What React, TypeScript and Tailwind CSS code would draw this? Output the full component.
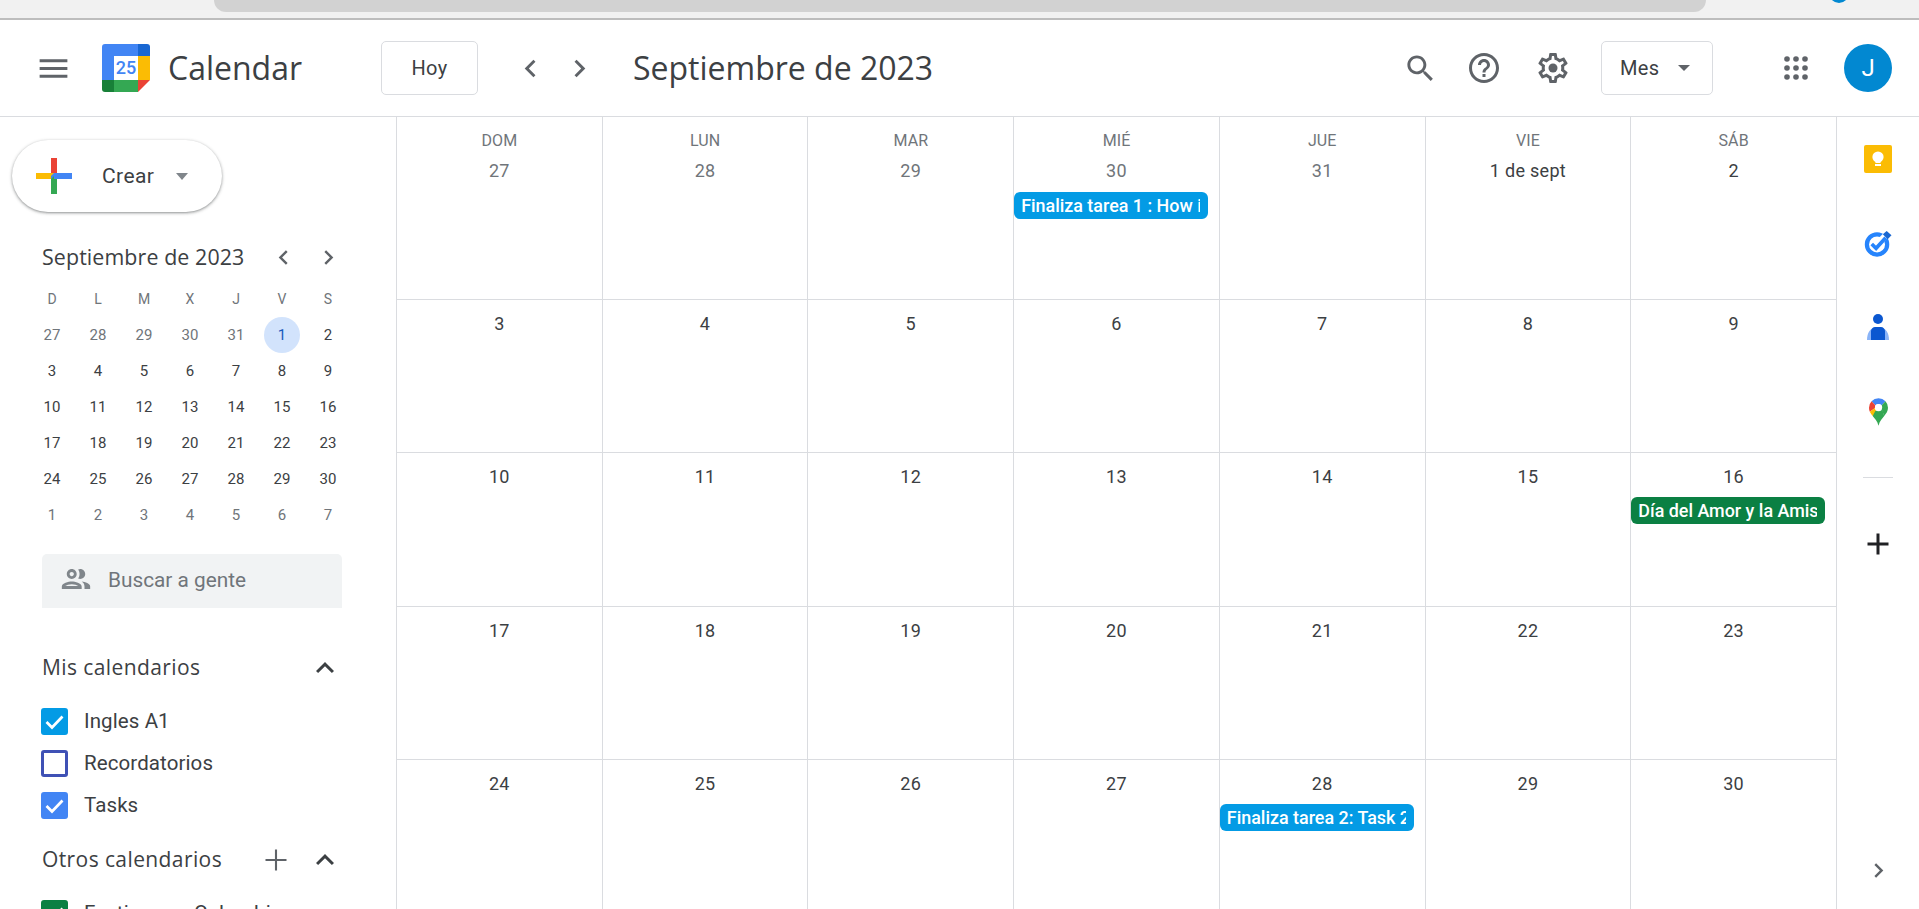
const ICONS = {
  menu: 'M3 18h18v-2H3v2zm0-5h18v-2H3v2zm0-7v2h18V6H3z',
  left: 'M15.41 7.41L14 6l-6 6 6 6 1.41-1.41L10.83 12z',
  right: 'M10 6L8.59 7.41 13.17 12l-4.58 4.59L10 18l6-6z',
  up: 'M12 8l-6 6 1.41 1.41L12 10.83l4.59 4.58L18 14z',
  search:
    'M15.5 14h-.79l-.28-.27C15.41 12.59 16 11.11 16 9.5 16 5.91 13.09 3 9.5 3S3 5.91 3 9.5 5.91 16 9.5 16c1.61 0 3.09-.59 4.23-1.57l.27.28v.79l5 4.99L20.49 19l-4.99-5zm-6 0C7.01 14 5 11.99 5 9.5S7.01 5 9.5 5 14 7.01 14 9.5 11.99 14 9.5 14z',
  help:
    'M11 18h2v-2h-2v2zm1-16C6.48 2 2 6.48 2 12s4.48 10 10 10 10-4.48 10-10S17.52 2 12 2zm0 18c-4.41 0-8-3.59-8-8s3.59-8 8-8 8 3.59 8 8-3.59 8-8 8zm0-14c-2.21 0-4 1.79-4 4h2c0-1.1.9-2 2-2s2 .9 2 2c0 2-3 1.75-3 5h2c0-2.25 3-2.5 3-5 0-2.21-1.79-4-4-4z',
  settings:
    'M19.43 12.98c.04-.32.07-.64.07-.98 0-.34-.03-.66-.07-.98l2.11-1.65c.19-.15.24-.42.12-.64l-2-3.46c-.09-.16-.26-.25-.44-.25-.06 0-.12.01-.17.03l-2.49 1c-.52-.4-1.08-.73-1.69-.98l-.38-2.65C14.46 2.18 14.25 2 14 2h-4c-.25 0-.46.18-.49.42l-.38 2.65c-.61.25-1.17.59-1.69.98l-2.49-1c-.06-.02-.12-.03-.18-.03-.17 0-.34.09-.43.25l-2 3.46c-.13.22-.07.49.12.64l2.11 1.65c-.04.32-.07.65-.07.98 0 .33.03.66.07.98l-2.11 1.65c-.19.15-.24.42-.12.64l2 3.46c.09.16.26.25.44.25.06 0 .12-.01.17-.03l2.49-1c.52.4 1.08.73 1.69.98l.38 2.65c.03.24.24.42.49.42h4c.25 0 .46-.18.49-.42l.38-2.65c.61-.25 1.17-.59 1.69-.98l2.49 1c.06.02.12.03.18.03.17 0 .34-.09.43-.25l2-3.46c.12-.22.07-.49-.12-.64l-2.11-1.65zm-1.98-1.71c.04.31.05.52.05.73 0 .21-.02.43-.05.73l-.14 1.13.89.7 1.08.84-.7 1.21-1.27-.51-1.04-.42-.9.68c-.43.32-.84.56-1.25.73l-1.06.43-.16 1.13-.2 1.35h-1.4l-.19-1.35-.16-1.13-1.06-.43c-.43-.18-.83-.41-1.23-.71l-.91-.7-1.06.43-1.27.51-.7-1.21 1.08-.84.89-.7-.14-1.13c-.03-.31-.05-.54-.05-.74s.02-.43.05-.73l.14-1.13-.89-.7-1.08-.84.7-1.21 1.27.51 1.04.42.9-.68c.43-.32.84-.56 1.25-.73l1.06-.43.16-1.13.2-1.35h1.39l.19 1.35.16 1.13 1.06.43c.43.18.83.41 1.23.71l.91.7 1.06-.43 1.27-.51.7 1.21-1.07.85-.89.7.14 1.13z',
  people:
    'M9 13.75c-2.34 0-7 1.17-7 3.5V19h14v-1.75c0-2.33-4.66-3.5-7-3.5zM4.34 17c.84-.58 2.87-1.25 4.66-1.25s3.82.67 4.66 1.25H4.34zM9 12c1.93 0 3.5-1.57 3.5-3.5S10.93 5 9 5 5.5 6.57 5.5 8.5 7.07 12 9 12zm0-5c.83 0 1.5.67 1.5 1.5S9.83 10 9 10s-1.5-.67-1.5-1.5S8.17 7 9 7zm7.04 6.81c1.16.84 1.96 1.96 1.96 3.44V19h4v-1.75c0-2.02-3.5-3.17-5.96-3.44zM15 12c1.93 0 3.5-1.57 3.5-3.5S16.93 5 15 5c-.54 0-1.04.13-1.5.35.63.89 1 1.98 1 3.15s-.37 2.26-1 3.15c.46.22.96.35 1.5.35z',
  plus: 'M19 13h-6v6h-2v-6H5v-2h6V5h2v6h6v2z',
  thinPlus: 'M19 12.7h-6.3V19h-1.4v-6.3H5v-1.4h6.3V5h1.4v6.3H19z',
};

function Icon({ d, className }: { d: string; className: string }) {
  return (
    <svg viewBox="0 0 24 24" fill="currentColor" className={className}>
      <path d={d} />
    </svg>
  );
}

function CalendarLogo() {
  return (
    <svg viewBox="0 0 48 48" className="w-[48px] h-[48px] shrink-0">
      <path d="M36 0H3a3 3 0 0 0-3 3v33h12V12h24z" fill="#4285f4" />
      <path d="M36 0v12h12V3a3 3 0 0 0-3-3z" fill="#1967d2" />
      <rect x="36" y="12" width="12" height="24" fill="#fbbc04" />
      <rect x="12" y="36" width="24" height="12" fill="#34a853" />
      <path d="M0 36v9a3 3 0 0 0 3 3h9V36z" fill="#188038" />
      <path d="M36 36h12L36 48z" fill="#ea4335" />
      <rect x="12" y="12" width="24" height="24" fill="#fff" />
      <text x="24" y="30" textAnchor="middle" fontSize="18" fontWeight="500" fill="#4285f4" fontFamily="Roboto, sans-serif">
        25
      </text>
    </svg>
  );
}

function GooglePlus() {
  return (
    <svg viewBox="0 0 36 36" className="w-[36px] h-[36px] shrink-0">
      <rect x="15" y="0" width="6" height="18" fill="#ea4335" />
      <rect x="0" y="15" width="18" height="6" fill="#fbbc04" />
      <rect x="15" y="18" width="6" height="18" fill="#34a853" />
      <rect x="18" y="15" width="18" height="6" fill="#4285f4" />
      <path d="M15 21l6-6h-3l-3 3z" fill="#4285f4" />
    </svg>
  );
}

function KeepIcon() {
  return (
    <svg viewBox="0 0 28 28" className="w-[28px] h-[28px]">
      <rect width="28" height="28" rx="2" fill="#fbbc04" />
      <circle cx="14" cy="12" r="5.6" fill="#fff" />
      <rect x="11.5" y="15" width="5" height="3" fill="#fff" />
      <rect x="11" y="19" width="6" height="2" fill="#fff" />
    </svg>
  );
}

function TasksIcon() {
  return (
    <svg viewBox="0 0 28 28" className="w-[28px] h-[27px]">
      <circle cx="13" cy="15" r="10.5" fill="none" stroke="#2684fc" strokeWidth="4.4" />
      <path d="M21 2l6 2-8 10-5-5z" fill="#fff" />
      <path d="M23 1l5 4.500-4 4-5-5z" fill="#1967d2" />
      <path d="M7.500 14.500l4.500 4.500 10-11" fill="none" stroke="#2684fc" strokeWidth="3.800" />
    </svg>
  );
}

function ContactsIcon() {
  return (
    <svg viewBox="0 0 22 26" className="w-[22px] h-[26px]">
      <circle cx="11" cy="5" r="5" fill="#0b57d0" />
      <path d="M0 26c0-7 3-12 8-12h6c5 0 8 5 8 12z" fill="#8ab4f8" />
      <path d="M4 26V17c0-2 2-4 4-4h6c2 0 4 2 4 4v9z" fill="#0b57d0" />
    </svg>
  );
}

function MapsIcon() {
  return (
    <svg viewBox="0 0 18 26" className="w-[19px] h-[28px]">
      <path d="M9 0a9 9 0 0 0-6.600 2.900L6 6.600A3.600 3.600 0 0 1 9 5.400a3.600 3.600 0 0 1 3 1.200l3.600-3.700A9 9 0 0 0 9 0z" fill="#4285f4" />
      <path d="M2.400 2.900A9 9 0 0 0 0 9c0 1.500.3 2.700.8 3.800L6 9a3.600 3.600 0 0 1 0-2.400z" fill="#ea4335" />
      <path d="M.8 12.800C1.500 14.300 2.400 15.500 3.500 16.800L12.300 10.500 9 12.600A3.600 3.600 0 0 1 6 9z" fill="#fbbc04" />
      <path d="M3.500 16.800C5.300 19.200 8 21.500 9 26c1-4.500 3.600-6.800 5.400-9.200L12 8.600 6 12z" fill="#34a853" />
      <path d="M12 6.600L15.600 2.900A9 9 0 0 1 18 9c0 3-1.600 5.500-3.600 7.800L12 10.500A3.600 3.600 0 0 0 12 6.600z" fill="#34a853" />
      <circle cx="9" cy="9" r="3.400" fill="#fff" />
    </svg>
  );
}

const MINI_HEADS = ['D', 'L', 'M', 'X', 'J', 'V', 'S'];
const MINI_DAYS = [
  27, 28, 29, 30, 31, 1, 2, 3, 4, 5, 6, 7, 8, 9, 10, 11, 12, 13, 14, 15, 16, 17, 18, 19, 20, 21, 22, 23, 24, 25, 26, 27,
  28, 29, 30, 1, 2, 3, 4, 5, 6, 7,
];

function MiniCalendar() {
  return (
    <div className="ml-[29px] mt-[6px] grid grid-cols-[repeat(7,46px)] auto-rows-[36px] text-[15px] text-center">
      {MINI_HEADS.map((h) => (
        <div key={h} className="flex items-center justify-center text-[14px] text-[#70757a]">
          {h}
        </div>
      ))}
      {MINI_DAYS.map((day, i) => {
        const outside = i < 5 || i >= 35;
        return (
          <div key={i} className="flex items-center justify-center pt-px">
            {i === 5 ? (
              <span className="w-[36px] h-[36px] -mt-px rounded-full bg-[#d2e3fc] text-[#185abc] flex items-center justify-center">
                {day}
              </span>
            ) : (
              <span className={outside ? 'text-[#70757a]' : 'text-[#3c4043]'}>{day}</span>
            )}
          </div>
        );
      })}
    </div>
  );
}

function CheckRow({ label, color, checked }: { label: string; color: string; checked: boolean }) {
  return (
    <div className="h-[42px] flex items-center pl-[41px] text-[20.500px] tracking-[0.1px] text-[#3c4043] shrink-0">
      <span
        className={`w-[27px] h-[27px] rounded-[3px] flex items-center justify-center shrink-0 border-[3px] ${color} ${
          checked ? '' : 'bg-white'
        }`}
      >
        {checked && (
          <svg viewBox="0 0 21 21" className="w-[21px] h-[21px]">
            <path d="M2.500 11l5.500 5.500L18.500 5.500" fill="none" stroke="#fff" strokeWidth="2.700" />
          </svg>
        )}
      </span>
      <span className="ml-[16px] whitespace-nowrap">{label}</span>
    </div>
  );
}

function Sidebar() {
  return (
    <aside className="w-[396px] shrink-0 overflow-hidden flex flex-col">
      <button className="mt-[23px] ml-[12px] w-[210px] h-[72px] shrink-0 rounded-full bg-white shadow-[0_1px_3px_1px_rgba(60,64,67,0.2),0_1px_2px_0_rgba(60,64,67,0.35)] flex items-center pl-[24px]">
        <GooglePlus />
        <span className="ml-[30px] text-[21px] tracking-[0.4px] text-[#3c4043] pt-px">Crear</span>
        <span className="ml-[22px] w-0 h-0 border-x-[6.500px] border-x-transparent border-t-[7px] border-t-[#80868b]" />
      </button>

      <div className="mt-[27px] h-[36px] shrink-0 flex items-center text-[#3c4043]">
        <span className="ml-[42px] w-[218px] font-['Open_Sans',sans-serif] text-[21.400px] tracking-[0.1px] whitespace-nowrap">
          Septiembre de 2023
        </span>
        <Icon d={ICONS.left} className="w-[29px] h-[29px] ml-[9px] text-[#5f6368]" />
        <Icon d={ICONS.right} className="w-[29px] h-[29px] ml-[16px] text-[#5f6368]" />
      </div>

      <MiniCalendar />

      <div className="mt-[21px] ml-[42px] w-[300px] h-[54px] shrink-0 bg-[#f1f3f4] rounded-t-[5px] flex items-center pl-[17px]">
        <Icon d={ICONS.people} className="w-[34px] h-[34px] text-[#80868b] -translate-y-[2px]" />
        <span className="ml-[15px] text-[20.800px] text-[#70757a]">Buscar a gente</span>
      </div>

      <div className="mt-[42px] h-[36px] shrink-0 flex items-center text-[#3c4043]">
        <span className="ml-[42px] w-[265px] font-['Open_Sans',sans-serif] font-medium text-[21px] tracking-[0.4px] whitespace-nowrap">
          Mis calendarios
        </span>
        <Icon d={ICONS.up} className="w-[36px] h-[36px]" />
      </div>

      <div className="mt-[14px] flex flex-col shrink-0">
        <CheckRow label="Ingles A1" color="bg-[#039be5] border-[#039be5]" checked />
        <CheckRow label="Recordatorios" color="border-[#3f51b5]" checked={false} />
        <CheckRow label="Tasks" color="bg-[#4285f4] border-[#4285f4]" checked />
      </div>

      <div className="mt-[16px] h-[36px] shrink-0 flex items-center text-[#3c4043]">
        <span className="ml-[42px] w-[216px] font-['Open_Sans',sans-serif] font-medium text-[21px] tracking-[0.4px] whitespace-nowrap">
          Otros calendarios
        </span>
        <Icon d={ICONS.thinPlus} className="w-[36px] h-[36px] text-[#5f6368]" />
        <Icon d={ICONS.up} className="w-[36px] h-[36px] ml-[13px]" />
      </div>

      <div className="mt-[14px] shrink-0">
        <CheckRow label="Festivos en Colombia" color="bg-[#0b8043] border-[#0b8043]" checked />
      </div>
    </aside>
  );
}

type Cell = { date: string; label?: string; muted?: boolean; event?: string; eventColor?: string };

const WEEK_LABELS = ['DOM', 'LUN', 'MAR', 'MIÉ', 'JUE', 'VIE', 'SÁB'];
const CELLS: Cell[] = [
  { date: '27', muted: true },
  { date: '28', muted: true },
  { date: '29', muted: true },
  { date: '30', muted: true, event: 'Finaliza tarea 1 : How i', eventColor: 'bg-[#039be5]' },
  { date: '31', muted: true },
  { date: '1 de sept' },
  { date: '2' },
  ...['3', '4', '5', '6', '7', '8', '9', '10', '11', '12', '13', '14', '15'].map((date) => ({ date })),
  { date: '16', event: 'Día del Amor y la Amis', eventColor: 'bg-[#0b8043]' },
  ...['17', '18', '19', '20', '21', '22', '23', '24', '25', '26', '27'].map((date) => ({ date })),
  { date: '28', event: 'Finaliza tarea 2: Task 2', eventColor: 'bg-[#039be5]' },
  { date: '29' },
  { date: '30' },
];

function MonthGrid() {
  return (
    <main className="w-[1441px] shrink-0 border-l border-[#dadce0] overflow-hidden">
      <div className="grid grid-cols-7 grid-rows-[183px_153px_154px_153px_153px] w-[1440px]">
        {CELLS.map((cell, i) => (
          <div
            key={i}
            className={`border-r border-b border-[#dadce0] flex flex-col items-center min-w-0 overflow-hidden ${
              i < 7 ? 'pt-[14px]' : 'pt-[12px]'
            }`}
          >
            {i < 7 && (
              <div className="h-[20px] leading-[20px] mb-[8px] text-[16px] tracking-[0.1px] text-[#70757a]">
                {WEEK_LABELS[i]}
              </div>
            )}
            <div
              className={`h-[24px] leading-[24px] text-[18px] tracking-[0.3px] ${
                cell.muted ? 'text-[#70757a]' : 'text-[#3c4043]'
              }`}
            >
              {cell.date}
            </div>
            {cell.event && (
              <div className={`${i < 7 ? 'mt-[9px]' : 'mt-[8px]'} self-start w-[194px] h-[27px] pl-[7px] pr-[8px] rounded-[6px] text-white text-[17.900px] font-medium leading-[27px] whitespace-nowrap ${cell.eventColor}`}>
                <span className="block overflow-hidden">{cell.event}</span>
              </div>
            )}
          </div>
        ))}
      </div>
    </main>
  );
}

function SidePanel() {
  return (
    <aside className="flex-1 flex flex-col items-center pt-[28px] pb-[24px]">
      <KeepIcon />
      <div className="mt-[57px]">
        <TasksIcon />
      </div>
      <div className="mt-[57px]">
        <ContactsIcon />
      </div>
      <div className="mt-[58px]">
        <MapsIcon />
      </div>
      <div className="mt-[51px] w-[30px] h-px bg-[#dadce0]" />
      <Icon d={ICONS.plus} className="mt-[48px] w-[36px] h-[36px] text-[#202124]" />
      <Icon d={ICONS.right} className="mt-auto w-[29px] h-[29px] text-[#5f6368]" />
    </aside>
  );
}

function Header() {
  return (
    <header className="h-[97px] shrink-0 border-b border-[#dadce0] flex items-center text-[#3c4043]">
      <Icon d={ICONS.menu} className="ml-[35px] w-[37px] h-[37px] text-[#5f6368]" />
      <div className="ml-[30px]">
        <CalendarLogo />
      </div>
      <span className="ml-[18px] w-[213px] font-['Open_Sans',sans-serif] text-[32px] text-[#3c4043]">Calendar</span>
      <button className="w-[97px] h-[54px] border border-[#dadce0] rounded-[5px] text-[20px] tracking-[0.3px]">Hoy</button>
      <Icon d={ICONS.left} className="ml-[35px] w-[35px] h-[35px] text-[#5f6368]" />
      <Icon d={ICONS.right} className="ml-[14px] w-[35px] h-[35px] text-[#5f6368]" />
      <span className="ml-[36px] w-[770px] font-['Open_Sans',sans-serif] text-[32px] whitespace-nowrap">
        Septiembre de 2023
      </span>
      <Icon d={ICONS.search} className="w-[35px] h-[35px] text-[#5f6368]" />
      <Icon d={ICONS.help} className="ml-[28px] w-[36px] h-[36px] text-[#5f6368]" />
      <svg viewBox="0 0 24 24" fill="#5f6368" className="ml-[33px] w-[36px] h-[36px]">
        <path d={ICONS.settings} />
        <circle cx="12" cy="12" r="3" />
      </svg>
      <button className="ml-[30px] w-[112px] h-[54px] border border-[#dadce0] rounded-[5px] flex items-center pl-[18px] text-[20px] tracking-[0.3px]">
        Mes
        <span className="ml-[19px] w-0 h-0 border-x-[6px] border-x-transparent border-t-[6px] border-t-[#5f6368]" />
      </button>
      <svg viewBox="0 0 24 24" fill="#5f6368" className="ml-[71px] w-[24px] h-[24px]">
        {[3, 12, 21].flatMap((y) => [3, 12, 21].map((x) => <circle key={`${x}-${y}`} cx={x} cy={y} r="2.800" />))}
      </svg>
      <div className="ml-[36px] w-[48px] h-[48px] rounded-full bg-[#0288d1] text-white text-[24px] flex items-center justify-center">
        J
      </div>
    </header>
  );
}

export default function App() {
  return (
    <div className="h-[909px] w-[1919px] overflow-hidden bg-white flex flex-col font-['Roboto',sans-serif]">
      <div className="h-[20px] shrink-0 bg-[#f1f1f1] border-b-2 border-[#bdbdbd] flex items-start overflow-hidden">
        <div className="ml-[214px] w-[1492px] h-[12px] bg-[#d2d2d2] rounded-b-[16px]" />
        <div className="ml-[123px] -mt-[17px] w-[20px] h-[20px] rounded-full bg-[#0288d1]" />
      </div>
      <Header />
      <div className="flex-1 flex min-h-0">
        <Sidebar />
        <MonthGrid />
        <SidePanel />
      </div>
    </div>
  );
}
